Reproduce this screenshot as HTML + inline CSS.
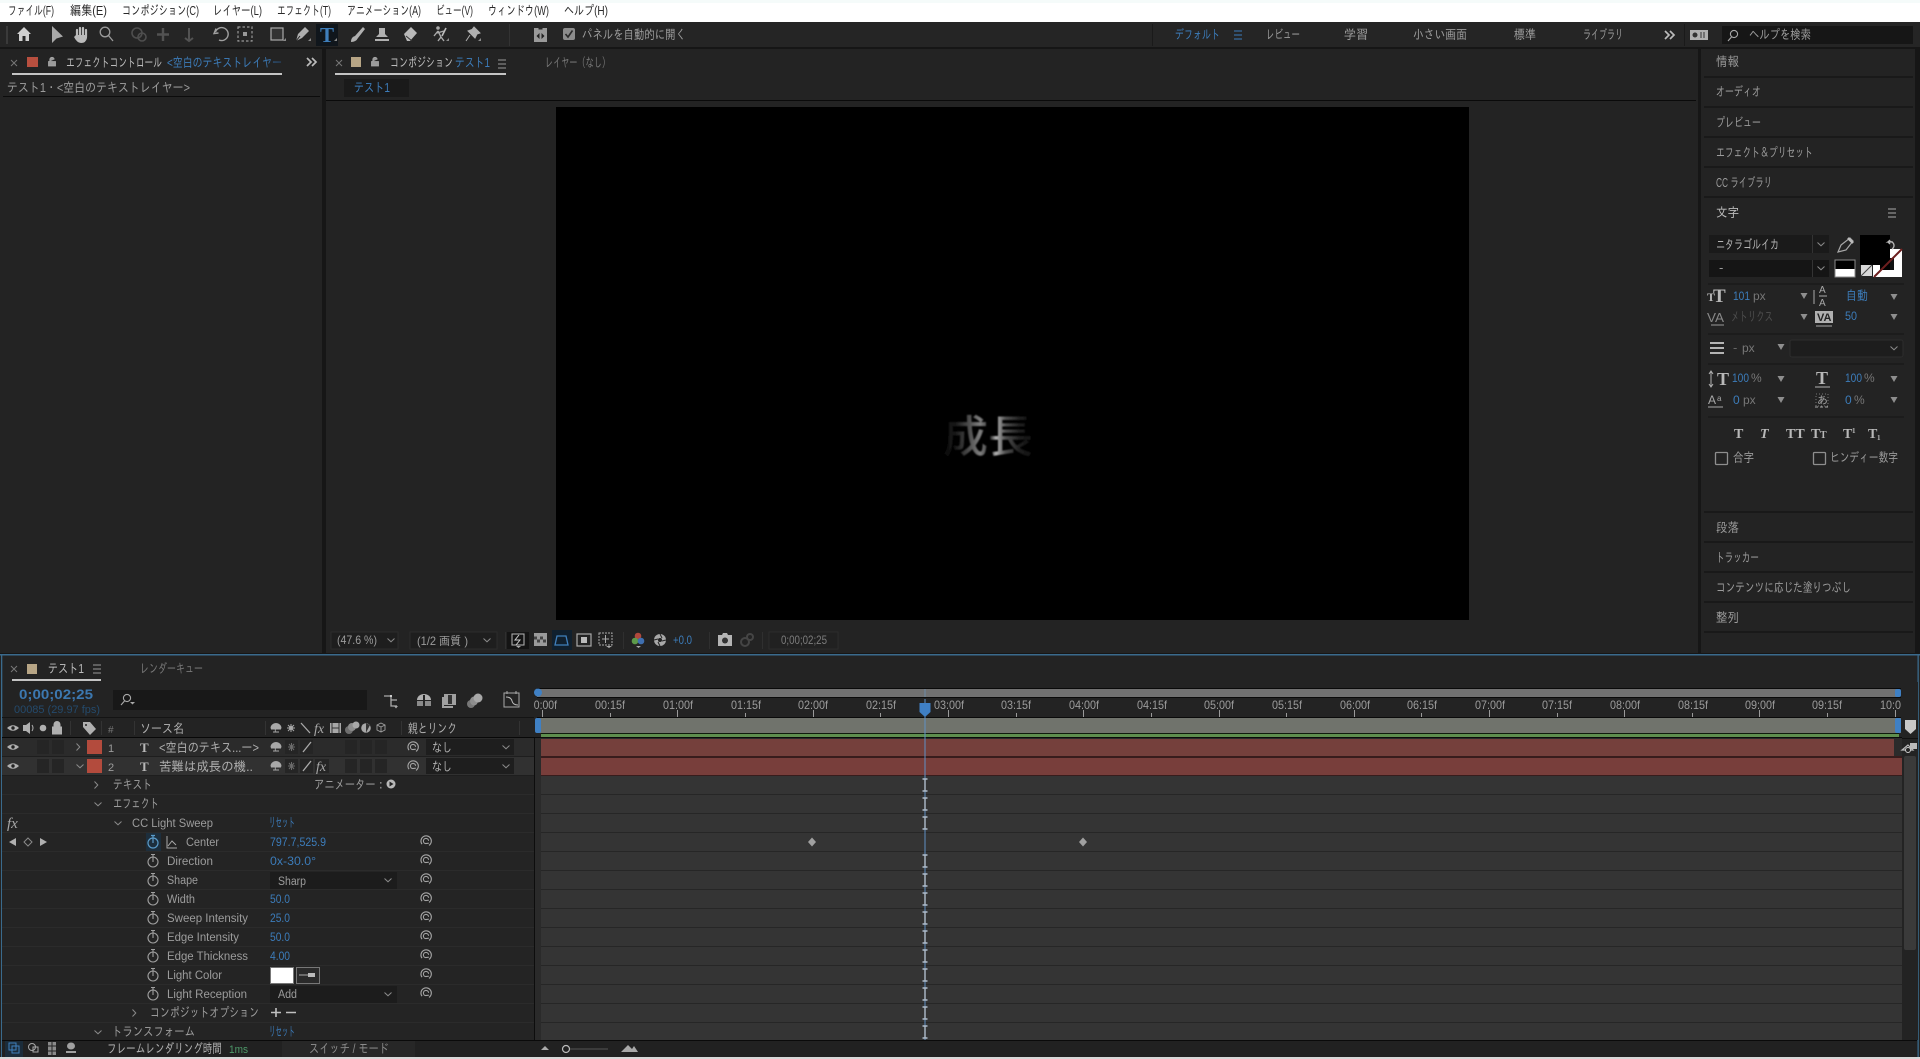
<!DOCTYPE html>
<html lang="ja"><head><meta charset="utf-8"><title>After Effects</title>
<style>
html,body{margin:0;padding:0;background:#232323;width:1920px;height:1059px;overflow:hidden}
svg{display:block;position:absolute;left:0;top:0}
text{font-family:"Liberation Sans","IPAGothic","Noto Sans CJK JP",sans-serif;font-size:13px;fill:#9c9c9c;white-space:pre}
.m{fill:#2a2a2a;font-size:13px}
.b{fill:#3c7cba}
.d{fill:#5a5a5a}
.s{font-size:12px}
.w{fill:#bcbcbc}
.sf{font-family:"Liberation Serif",serif;font-weight:bold;fill:#b8b8b8}
</style></head><body>
<svg width="1920" height="1059" viewBox="0 0 1920 1059" xmlns="http://www.w3.org/2000/svg">
<defs>
<g id="sp" fill="none" stroke="#a4a4a4" stroke-width="1.1"><path d="M-4 3.2A5.2 5.2 0 1 1 3 4.4M2.6 -.2A2.6 2.6 0 1 0 -.2 2.6L2.8 2.2"/></g>
<g id="sw" fill="none" stroke="#a0a0a0" stroke-width="1.1"><circle cy="1" r="5"/><path d="M-2 -6.5H2M0 -6V1"/></g>
<path id="cd" d="M-3.5 -1.5L0 1.8L3.5 -1.5" fill="none" stroke="#8a8a8a" stroke-width="1"/>
<path id="cr" d="M-1.5 -3.5L1.8 0L-1.5 3.5" fill="none" stroke="#8a8a8a" stroke-width="1"/>
<path id="tri" d="M-3.5 -3H3.500L0 3Z" fill="#8e8e8e"/>
<path id="xx" d="M-3 -3L3 3M3 -3L-3 3" stroke="#777" stroke-width="1"/>
<path id="lk" d="M-3.5 -.5H3.5V4H-3.5ZM-2.2 -.5V-2.5A2.2 2.2 0 0 1 2.2 -2.5" fill="#a8a8a8" stroke="#a8a8a8" stroke-width=".8" fill-opacity=".9"/>
<g id="I" stroke="#aebccc" stroke-width="1.4"><path d="M-2.5 -6H2.5M-2.5 6H2.5M0 -6V6"/></g>
<path id="key" d="M0 -4.5L4 0L0 4.500L-4 0Z" fill="#a0a0a0"/>
<g id="eye"><path d="M-6 0Q0 -5.5 6 0Q0 5.5 -6 0Z" fill="#b0b0b0"/><circle r="1.7" fill="#222"/></g>
<g id="shy"><path d="M-5 1A5 4.5 0 0 1 5 1ZM-5 2H5M-.7 1V5M-3 5H3" fill="#a8a8a8" stroke="#a8a8a8" stroke-width=".9"/></g>
<pattern id="rr" x="541" y="776" width="10" height="19" patternUnits="userSpaceOnUse"><rect width="10" height="19" fill="#343434"/><rect y="18" width="10" height="1" fill="#262626"/></pattern>
<pattern id="rl" x="0" y="776" width="10" height="19" patternUnits="userSpaceOnUse"><rect width="10" height="19" fill="#242424"/><rect y="18" width="10" height="1" fill="#2b2b2b"/></pattern>
<linearGradient id="sweep" gradientUnits="userSpaceOnUse" x1="935" y1="0" x2="1040" y2="0">
<stop offset="0" stop-color="#050505"/><stop offset=".19" stop-color="#161616"/><stop offset=".33" stop-color="#505050"/><stop offset=".43" stop-color="#808080"/><stop offset=".49" stop-color="#505050"/><stop offset=".53" stop-color="#303030"/><stop offset=".58" stop-color="#b4b4b4"/><stop offset=".67" stop-color="#505050"/><stop offset=".81" stop-color="#1e1e1e"/><stop offset="1" stop-color="#050505"/></linearGradient>
<filter id="bl"><feGaussianBlur stdDeviation=".8"/></filter>
<clipPath id="ruler"><rect x="534" y="698" width="1367" height="20"/></clipPath>
<linearGradient id="fade" x1="0" x2="1" y1="0" y2="0"><stop offset=".85" stop-color="#3c7cba"/><stop offset="1" stop-color="#26466a"/></linearGradient>
</defs>

<!-- base -->
<rect width="1920" height="1059" fill="#161616"/>
<!-- menu bar -->
<rect width="1920" height="22" fill="#fff"/><rect width="1920" height="3" fill="#f5fbfa"/>
<text class="m" x="8" y="15" textLength="46" lengthAdjust="spacingAndGlyphs">ファイル(F)</text>
<text class="m" x="70" y="15" textLength="37" lengthAdjust="spacingAndGlyphs">編集(E)</text>
<text class="m" x="122" y="15" textLength="77" lengthAdjust="spacingAndGlyphs">コンポジション(C)</text>
<text class="m" x="213" y="15" textLength="49" lengthAdjust="spacingAndGlyphs">レイヤー(L)</text>
<text class="m" x="277" y="15" textLength="54" lengthAdjust="spacingAndGlyphs">エフェクト(T)</text>
<text class="m" x="347" y="15" textLength="74" lengthAdjust="spacingAndGlyphs">アニメーション(A)</text>
<text class="m" x="436" y="15" textLength="37" lengthAdjust="spacingAndGlyphs">ビュー(V)</text>
<text class="m" x="488" y="15" textLength="61" lengthAdjust="spacingAndGlyphs">ウィンドウ(W)</text>
<text class="m" x="564" y="15" textLength="44" lengthAdjust="spacingAndGlyphs">ヘルプ(H)</text>

<!-- toolbar -->
<rect y="22" width="1920" height="25" fill="#252525"/>
<rect x="6" y="26" width="2" height="18" fill="#3a3a3a"/>
<path d="M17 34L24 27L31 34H29V41H25.5V36H22.5V41H19V34Z" fill="#cfcfcf"/>
<path d="M52 26V43L56.5 38.5L63 36.5Z" fill="#a8a8a8"/>
<g stroke="#bbb" stroke-width="2.2" stroke-linecap="round" fill="none"><path d="M77 30V36M80 28V36M83 28V36M86 30V37"/></g><path d="M76 35H87V38Q86 43 81 43Q77 43 74 37Z" fill="#bbb"/>
<g fill="none" stroke="#9a9a9a" stroke-width="1.3"><circle cx="105" cy="32" r="4.8"/><path d="M108.5 35.5L113 41"/></g>
<g fill="none" stroke="#4e4e4e" stroke-width="1.6"><circle cx="137" cy="33" r="5"/><circle cx="142" cy="37" r="4"/></g>
<path d="M163 28V41M157 34.5H169" stroke="#525252" stroke-width="2.4"/><path d="M189 28V41M185 38L189 41L193 38" stroke="#525252" stroke-width="2" fill="none"/>
<g fill="none" stroke="#a0a0a0" stroke-width="1.4"><path d="M216 28.5L214 33.5L218.5 33M215.5 32A6.5 6.5 0 1 1 219 40" /></g>
<rect x="238" y="27" width="14" height="14" fill="none" stroke="#999" stroke-width="1.2" stroke-dasharray="2.5 2"/><rect x="243" y="32" width="4" height="4" fill="#999"/>
<rect x="271" y="28" width="12" height="12" fill="#333" stroke="#aaa" stroke-width="1.2"/>
<path d="M296 41L298 34L305 27L309 31L302 38Z" fill="#b0b0b0"/><path d="M296 41L300 36" stroke="#222"/>
<rect x="316" y="24" width="22" height="22" fill="#10161c"/><text x="320" y="42" style="font-family:'Liberation Serif',serif;font-size:21px;font-weight:bold;fill:#3f7fbc">T</text>
<path d="M351 42Q351 37 355 36L363 27L365 29L358 38Q356 42 351 42Z" fill="#b0b0b0"/>
<path d="M379 28H385V34L388 37H376L379 34ZM375 39H389V41H375Z" fill="#b0b0b0"/>
<path d="M404 34L411 27L417 33L410 41H407Z" fill="#b8b8b8"/><path d="M406 36L412 41" stroke="#333"/>
<circle cx="438" cy="28" r="1.8" fill="#aaa"/><path d="M438 31L434 36M438 31L441 37L438 41M441 37L444 41M437 33L444 31" stroke="#aaa" stroke-width="1.4" fill="none"/><path d="M446 28L442 36" stroke="#bbb" stroke-width="1.6"/>
<path d="M474 27L480 33L477 34L475 38L468 31L472 29.5ZM470 35L466 41" fill="#b0b0b0" stroke="#b0b0b0"/>
<g fill="#8a8a8a"><path d="M283 41h3v-3zM308 41h3v-3zM334 41h3v-3zM446 41h3v-3zM478 41h3v-3z"/></g>
<rect x="509" y="24" width="1" height="22" fill="#333"/>
<rect x="534" y="28" width="13" height="14" fill="#9a9a9a"/><path d="M538.500 27.500h4v2h-4z" fill="#252525"/><path d="M539.500 33V39L536.500 36ZM541.500 33V39L544.500 36Z" fill="#222"/>
<rect x="563" y="28" width="12" height="12" rx="2" fill="#8c8c8c"/><path d="M565.5 34L568 37L572.5 30.5" stroke="#2a2a2a" stroke-width="1.6" fill="none"/>
<text x="582" y="39" textLength="104" lengthAdjust="spacingAndGlyphs">パネルを自動的に開く</text>
<rect x="1152" y="24" width="1" height="22" fill="#1a1a1a"/>
<text class="b" x="1175" y="39" textLength="45" lengthAdjust="spacingAndGlyphs">デフォルト</text>
<path d="M1234 31H1242M1234 35H1242M1234 39H1242" stroke="#3c7cba"/>
<text x="1266" y="39" textLength="34" lengthAdjust="spacingAndGlyphs">レビュー</text>
<text x="1344" y="39" textLength="24" lengthAdjust="spacingAndGlyphs">学習</text>
<text x="1413" y="39" textLength="54" lengthAdjust="spacingAndGlyphs">小さい画面</text>
<text x="1514" y="39" textLength="22" lengthAdjust="spacingAndGlyphs">標準</text>
<text x="1583" y="39" textLength="40" lengthAdjust="spacingAndGlyphs">ライブラリ</text>
<path d="M1665 31L1669 35L1665 39M1670 31L1674 35L1670 39" fill="none" stroke="#bbb" stroke-width="1.7"/>
<rect x="1684" y="24" width="1" height="22" fill="#1a1a1a"/>
<rect x="1690" y="30" width="18" height="10" fill="#b0b0b0"/><circle cx="1695" cy="35" r="2.5" fill="#333"/><path d="M1701 32V38M1704 32V38" stroke="#333"/>
<rect x="1722" y="26" width="191" height="18" fill="#161616"/>
<g fill="none" stroke="#a8a8a8" stroke-width="1.1"><circle cx="1734" cy="34" r="3.6"/><path d="M1731.5 37L1728 41"/></g>
<text x="1749" y="39" textLength="62" lengthAdjust="spacingAndGlyphs">ヘルプを検索</text>

<!-- left panel -->
<rect y="49" width="322" height="604" fill="#232323"/>
<use href="#xx" x="14" y="63"/><rect x="27" y="57" width="11" height="10" fill="#b84f3f"/><use href="#lk" x="52" y="62"/>
<text class="w" x="66" y="67" textLength="96" lengthAdjust="spacingAndGlyphs">エフェクトコントロール</text>
<text x="167" y="67" textLength="115" lengthAdjust="spacingAndGlyphs" style="fill:url(#fade)">&lt;空白のテキストレイヤー</text>
<path d="M307 58L311 62L307 66M312 58L316 62L312 66" fill="none" stroke="#bbb" stroke-width="1.7"/>
<rect x="12" y="73" width="270" height="2" fill="#c4c4c4"/>
<text x="7" y="92" textLength="183" lengthAdjust="spacingAndGlyphs">テスト1・&lt;空白のテキストレイヤー&gt;</text>
<rect x="3" y="96" width="317" height="1" fill="#0c0c0c"/>

<!-- comp panel -->
<rect x="326" y="49" width="1372" height="604" fill="#232323"/>
<use href="#xx" x="339" y="63"/><rect x="351" y="57" width="10" height="10" fill="#b7a585"/><use href="#lk" x="375" y="62"/>
<text class="w" x="390" y="67" textLength="63" lengthAdjust="spacingAndGlyphs">コンポジション</text>
<text class="b" x="455" y="67" textLength="35" lengthAdjust="spacingAndGlyphs">テスト1</text>
<path d="M498 60H506M498 64H506M498 68H506" stroke="#9a9a9a"/>
<rect x="335" y="73" width="171" height="2" fill="#c4c4c4"/>
<text class="d" x="545" y="67" textLength="65" lengthAdjust="spacingAndGlyphs" style="fill:#787878">レイヤー（なし）</text>
<rect x="344" y="79" width="65" height="18" fill="#1a1a1a"/>
<text class="b" x="354" y="92" textLength="36" lengthAdjust="spacingAndGlyphs">テスト1</text>
<rect x="326" y="100" width="1370" height="1" fill="#0a0a0a"/>
<rect x="326" y="101" width="1372" height="519" fill="#232323"/>
<rect x="556" y="107" width="913" height="513" fill="#000"/>
<text x="943" y="452" filter="url(#bl)" style="font-family:'Noto Sans CJK JP','IPAGothic',sans-serif;font-size:44px;font-weight:500;fill:url(#sweep)" textLength="90" lengthAdjust="spacingAndGlyphs">成長</text>

<!-- viewer footer -->
<rect x="331" y="632" width="67" height="17" fill="#1e1e1e" stroke="#2c2c2c"/>
<text x="337" y="644" textLength="40" lengthAdjust="spacingAndGlyphs" style="font-size:12px">(47.6 %)</text><use href="#cd" x="391" y="640"/>
<rect x="410" y="632" width="87" height="17" fill="#1e1e1e" stroke="#2c2c2c"/>
<text x="417" y="645" textLength="51" lengthAdjust="spacingAndGlyphs" style="font-size:12px">(1/2 画質 )</text><use href="#cd" x="487" y="640"/>
<rect x="507" y="632" width="22" height="17" fill="#141414"/>
<rect x="512" y="634" width="12" height="11" fill="none" stroke="#aaa" stroke-width="1.1"/><path d="M519 635L515 640H520L516 645" stroke="#ccc" fill="none"/><path d="M516 646h5l-2.500 2z" fill="#aaa"/>
<rect x="534" y="633" width="13" height="13" fill="#9a9a9a"/><path d="M534 636.500h3v3h-3zM540 636.500h3v3h-3zM537 639.500h3v3h-3zM543 639.500h3v3h-3z" fill="#444"/>
<rect x="552" y="630" width="20" height="20" fill="#10202e"/>
<path d="M557 636H566L568 645H555Z" fill="none" stroke="#3f7fbc" stroke-width="1.3"/>
<rect x="577" y="634" width="14" height="12" fill="none" stroke="#aaa" stroke-width="1.2"/><rect x="581" y="637" width="6" height="6" fill="#bbb"/>
<rect x="599" y="633" width="13" height="12" fill="none" stroke="#aaa" stroke-dasharray="2 1"/><path d="M605.500 635V643M602 639H609" stroke="#aaa"/><path d="M606 646h6l-3 2z" fill="#aaa"/>
<circle cx="638" cy="636" r="3.300" fill="#b0483c"/><circle cx="635" cy="641" r="3.300" fill="#5d9a4a"/><circle cx="641" cy="641" r="3.300" fill="#3f6fb0"/><path d="M636 646h5l-2.500 2z" fill="#aaa"/>
<circle cx="660" cy="640" r="6" fill="#a8a8a8"/><circle cx="660" cy="640" r="2" fill="#232323"/><path d="M660 634L662 638M666 640L662 641M660 646L658 642M654 640L658 639" stroke="#232323"/>
<text class="b" x="673" y="644" textLength="19" lengthAdjust="spacingAndGlyphs" style="font-size:12px">+0.0</text>
<path d="M718 635H722L723 633H727L728 635H732V646H718Z" fill="#b4b4b4"/><circle cx="725" cy="640.500" r="3" fill="#333"/>
<circle cx="745" cy="642" r="4" fill="none" stroke="#454545" stroke-width="2"/><circle cx="750" cy="637" r="3" fill="none" stroke="#454545" stroke-width="2"/>
<rect x="769" y="632" width="69" height="17" fill="#212121" stroke="#2c2c2c"/>
<text x="781" y="644" textLength="46" lengthAdjust="spacingAndGlyphs" style="font-size:12px;fill:#7c7c7c">0;00;02;25</text>
<rect x="505" y="632" width="1" height="17" fill="#2f2f2f"/><rect x="623" y="632" width="1" height="17" fill="#2f2f2f"/><rect x="709" y="632" width="1" height="17" fill="#2f2f2f"/><rect x="762" y="632" width="1" height="17" fill="#2f2f2f"/>

<!-- right column -->
<rect x="1701" y="49" width="214" height="604" fill="#232323"/>
<g fill="#191919"><rect x="1704" y="76" width="209" height="2"/><rect x="1704" y="106" width="209" height="2"/><rect x="1704" y="136" width="209" height="2"/><rect x="1704" y="166" width="209" height="2"/><rect x="1704" y="196" width="209" height="2"/><rect x="1704" y="511" width="209" height="2"/><rect x="1704" y="541" width="209" height="2"/><rect x="1704" y="571" width="209" height="2"/><rect x="1704" y="601" width="209" height="2"/><rect x="1704" y="631" width="209" height="2"/></g>
<text x="1716" y="66" textLength="23" lengthAdjust="spacingAndGlyphs">情報</text>
<text x="1716" y="96" textLength="45" lengthAdjust="spacingAndGlyphs">オーディオ</text>
<text x="1716" y="127" textLength="45" lengthAdjust="spacingAndGlyphs">プレビュー</text>
<text x="1716" y="157" textLength="97" lengthAdjust="spacingAndGlyphs">エフェクト＆プリセット</text>
<text x="1716" y="187" textLength="56" lengthAdjust="spacingAndGlyphs">CC ライブラリ</text>
<text class="w" x="1716" y="217" textLength="23" lengthAdjust="spacingAndGlyphs">文字</text>
<path d="M1888 209H1896M1888 213H1896M1888 217H1896" stroke="#a8a8a8" stroke-width="1.100"/>
<rect x="1709" y="235" width="120" height="18" fill="#1a1a1a"/><rect x="1812" y="235" width="1" height="18" fill="#333"/>
<text x="1716" y="249" textLength="63" lengthAdjust="spacingAndGlyphs" style="fill:#b4b4b4">ニタラゴルイカ</text><use href="#cd" x="1821" y="244"/>
<rect x="1709" y="260" width="120" height="17" fill="#151515"/><rect x="1812" y="260" width="1" height="17" fill="#333"/>
<text x="1719" y="272">-</text><use href="#cd" x="1821" y="268"/>
<path d="M1838 252L1841 245L1850 238L1853 241L1846 250Z" fill="none" stroke="#a8a8a8" stroke-width="1.200"/><path d="M1848 238L1853 243" stroke="#bbb" stroke-width="2.500"/>
<rect x="1835" y="260" width="20" height="9" fill="#000"/><rect x="1835" y="269" width="20" height="8" fill="#fff"/><rect x="1835" y="260" width="20" height="17" fill="none" stroke="#8a8a8a"/>
<rect x="1873" y="249" width="29" height="28" fill="#fff"/><rect x="1880" y="258" width="14" height="12" fill="#000"/>
<rect x="1860" y="235" width="30" height="30" fill="#000"/><rect x="1890" y="258" width="4" height="12" fill="#111"/>
<path d="M1874 277L1902 249" stroke="#6c1e1e" stroke-width="2"/>
<rect x="1861" y="265" width="11" height="11" fill="#d8d8d8"/><path d="M1861 276L1872 265" stroke="#444"/>
<path d="M1892 249A4 4 0 1 0 1888 242H1893M1890 240L1888 242L1890 244" fill="none" stroke="#b8b8b8" stroke-width="1.300"/>

<g fill="#1c1c1c"><rect x="1708" y="283" width="196" height="2"/><rect x="1708" y="333" width="196" height="2"/><rect x="1708" y="363" width="196" height="2"/><rect x="1708" y="416" width="196" height="2"/></g>
<text class="sf" x="1707" y="301" style="font-size:12px">T</text><text class="sf" x="1713" y="302" style="font-size:19px">T</text>
<text class="b" x="1733" y="300" textLength="17" lengthAdjust="spacingAndGlyphs" style="font-size:12px">101</text><text x="1753" y="300" style="fill:#777" class="s">px</text><use href="#tri" x="1804" y="296"/>
<text x="1819" y="293" style="fill:#a8a8a8;font-size:10px">A</text><text x="1819" y="306" style="fill:#a8a8a8;font-size:10px">A</text><path d="M1814 290V304M1819 296H1827" stroke="#a8a8a8"/>
<text class="b" x="1846" y="300" textLength="22" lengthAdjust="spacingAndGlyphs">自動</text><use href="#tri" x="1894" y="297"/>
<text x="1707" y="322" style="fill:#888;font-size:13px" textLength="17" lengthAdjust="spacingAndGlyphs">VA</text><path d="M1711 325H1724" stroke="#999"/>
<text class="d" x="1731" y="321" textLength="42" lengthAdjust="spacingAndGlyphs" style="fill:#4e4e4e">メトリクス</text><use href="#tri" x="1804" y="317"/>
<rect x="1815" y="311" width="18" height="12" fill="#b0b0b0"/><text x="1817" y="321" style="font-size:11px;fill:#232323;font-weight:bold">VA</text><path d="M1816 326H1832" stroke="#a8a8a8"/>
<text class="b" x="1845" y="320" textLength="12" lengthAdjust="spacingAndGlyphs" style="font-size:12px">50</text><use href="#tri" x="1894" y="317"/>
<path d="M1710 343H1724M1710 348H1724M1710 353H1724" stroke="#b4b4b4" stroke-width="2"/>
<text x="1733" y="352" style="fill:#666">- </text><text x="1742" y="352" class="s" style="fill:#777">px</text><use href="#tri" x="1781" y="347"/>
<rect x="1790" y="340" width="113" height="17" rx="2" fill="#1d1d1d" stroke="#2d2d2d"/><use href="#cd" x="1894" y="348"/>
<text class="sf" x="1717" y="385" style="font-size:18px">T</text><path d="M1711 372V386M1709 374L1711 371L1713 374M1709 384L1711 387L1713 384" stroke="#b0b0b0" fill="none"/>
<text class="b" x="1732" y="382" textLength="17" lengthAdjust="spacingAndGlyphs" style="font-size:12px">100</text><text x="1751" y="382" class="s" style="fill:#777">%</text><use href="#tri" x="1781" y="379"/>
<text class="sf" x="1816" y="384" style="font-size:18px">T</text><path d="M1815 387H1830" stroke="#b0b0b0"/>
<text class="b" x="1845" y="382" textLength="17" lengthAdjust="spacingAndGlyphs" style="font-size:12px">100</text><text x="1864" y="382" class="s" style="fill:#777">%</text><use href="#tri" x="1894" y="379"/>
<text x="1708" y="404" style="font-size:12px;fill:#a8a8a8">A</text><text x="1717" y="401" style="font-size:8px;fill:#a8a8a8">a</text><path d="M1708 407H1723" stroke="#a8a8a8"/>
<text class="b" x="1733" y="404" style="font-size:12px">0</text><text x="1743" y="404" class="s" style="fill:#777">px</text><use href="#tri" x="1781" y="400"/>
<text x="1817" y="404" style="font-size:11px;fill:#a8a8a8">あ</text><path d="M1815 407H1829" stroke="#a8a8a8" stroke-dasharray="3 2"/><rect x="1816" y="394" width="12" height="12" fill="none" stroke="#777" stroke-dasharray="1 2"/>
<text class="b" x="1845" y="404" style="font-size:12px">0</text><text x="1854" y="404" class="s" style="fill:#777">%</text><use href="#tri" x="1894" y="400"/>
<text class="sf" x="1734" y="438" style="font-size:14px">T</text><text class="sf" x="1760" y="438" style="font-size:14px;font-style:italic">T</text><text class="sf" x="1786" y="438" style="font-size:14px">TT</text><text class="sf" x="1811" y="438" style="font-size:14px">T</text><text class="sf" x="1820" y="438" style="font-size:10px">T</text><text class="sf" x="1843" y="438" style="font-size:14px">T</text><text class="sf" x="1852" y="433" style="font-size:7px">1</text><text class="sf" x="1868" y="438" style="font-size:14px">T</text><text class="sf" x="1877" y="440" style="font-size:7px">1</text>
<rect x="1715.500" y="452.500" width="12" height="12" rx="1" fill="none" stroke="#8e8e8e" stroke-width="1.300"/><text x="1733" y="462" textLength="21" lengthAdjust="spacingAndGlyphs">合字</text>
<rect x="1813.500" y="452.500" width="12" height="12" rx="1" fill="none" stroke="#8e8e8e" stroke-width="1.300"/><text x="1830" y="462" textLength="68" lengthAdjust="spacingAndGlyphs">ヒンディー数字</text>
<text x="1716" y="532" textLength="23" lengthAdjust="spacingAndGlyphs">段落</text>
<text x="1716" y="562" textLength="43" lengthAdjust="spacingAndGlyphs">トラッカー</text>
<text x="1716" y="592" textLength="135" lengthAdjust="spacingAndGlyphs">コンテンツに応じた塗りつぶし</text>
<text x="1716" y="622" textLength="23" lengthAdjust="spacingAndGlyphs">整列</text>

<!-- timeline frame -->
<rect x="0" y="654" width="1920" height="403" fill="#232323"/>
<rect x="0" y="654" width="1920" height="1.500" fill="#3a6a8c"/>
<rect x="1" y="654" width="1.300" height="403" fill="#3a6a8c"/><rect x="1917.500" y="654" width="1.300" height="403" fill="#3a6a8c"/>
<use href="#xx" x="14" y="669"/><rect x="27" y="664" width="10" height="10" fill="#b7a585"/>
<text class="w" x="48" y="673" textLength="36" lengthAdjust="spacingAndGlyphs">テスト1</text>
<path d="M93 665H101M93 669H101M93 673H101" stroke="#9a9a9a"/>
<rect x="12" y="679" width="89" height="2" fill="#c4c4c4"/>
<text x="140" y="673" textLength="63" lengthAdjust="spacingAndGlyphs" style="fill:#787878">レンダーキュー</text>
<text x="19" y="699" textLength="74" lengthAdjust="spacingAndGlyphs" style="font-size:14px;font-weight:bold;fill:#3c78b0">0;00;02;25</text>
<text x="14" y="713" textLength="86" lengthAdjust="spacingAndGlyphs" style="font-size:11px;fill:#244a6c">00085 (29.97 fps)</text>
<rect x="113" y="690" width="254" height="20" fill="#181818"/>
<g fill="none" stroke="#a8a8a8" stroke-width="1.100"><circle cx="127" cy="698" r="3.600"/><path d="M124.500 701L121 705"/></g><path d="M130 702h5l-2.500 2.500z" fill="#aaa"/>
<!-- tl toolbar icons -->
<path d="M384 696H391M391 695V706H397M391 700H397" fill="none" stroke="#aaa" stroke-width="1.300"/><rect x="390" y="695" width="2" height="2" fill="#ccc"/><path d="M394 706h4l-2 2.500z" fill="#aaa"/>
<path d="M417 700A7 6 0 0 1 431 700Z" fill="#b0b0b0"/><rect x="417" y="701" width="14" height="5" fill="#8a8a8a"/><rect x="423" y="695" width="2" height="11" fill="#232323"/>
<rect x="444" y="694" width="12" height="11" fill="#a0a0a0"/><path d="M448 695H452V704H448Z" fill="#333"/><rect x="442" y="697" width="2" height="10" fill="#a0a0a0"/><rect x="442" y="706" width="11" height="2" fill="#a0a0a0"/>
<ellipse cx="471" cy="704" rx="4" ry="4" fill="#777"/><ellipse cx="474" cy="701" rx="4" ry="4.500" fill="#8e8e8e"/><ellipse cx="478" cy="698" rx="4.500" ry="4.500" fill="#a8a8a8"/>
<rect x="504" y="693" width="15" height="14" fill="none" stroke="#aaa"/><path d="M506 697Q511 697 512 701T518 705" fill="none" stroke="#bbb"/><path d="M507 691V694M516 691V694" stroke="#aaa"/>

<!-- left header -->
<rect x="2" y="717" width="532" height="1" fill="#141414"/>
<use href="#eye" x="13" y="728"/>
<path d="M23 725H26L30 722V734L26 731H23Z" fill="#b0b0b0"/><path d="M32 725Q34 728 32 731" stroke="#b0b0b0" fill="none"/>
<circle cx="43" cy="728" r="3.300" fill="#b0b0b0"/>
<path d="M52.500 727H61.500V734H52.500ZM54 727V724.500A3 3 0 0 1 60 724.500V727" fill="#b0b0b0" stroke="#b0b0b0"/>
<rect x="70" y="721" width="1" height="14" fill="#333"/>
<path d="M83 722H90L96 729L90 735L83 727Z" fill="#b0b0b0"/><circle cx="86" cy="725" r="1" fill="#232323"/>
<rect x="101" y="721" width="1" height="14" fill="#333"/>
<text x="108" y="733" style="fill:#777;font-size:10px">#</text><rect x="134" y="721" width="1" height="14" fill="#333"/>
<text x="140" y="733" textLength="44" lengthAdjust="spacingAndGlyphs" style="fill:#b0b0b0">ソース名</text>
<rect x="265" y="721" width="1" height="14" fill="#333"/>
<use href="#shy" x="276" y="727"/>
<g stroke="#a8a8a8"><path d="M287 728H295M291 724V732M288 725L294 731M294 725L288 731"/></g><circle cx="291" cy="728" r="2" fill="#a8a8a8"/>
<path d="M301 723L310 733" stroke="#a8a8a8" stroke-width="1.300"/>
<text x="314" y="733" style="font-family:'Liberation Serif',serif;font-style:italic;font-size:14px;fill:#a8a8a8">fx</text>
<rect x="330" y="723" width="11" height="10" fill="#a8a8a8"/><path d="M332 723V733M339 723V733M332 728H339" stroke="#333"/>
<circle cx="349" cy="730" r="4" fill="#6e6e6e"/><circle cx="352" cy="727" r="4" fill="#8c8c8c"/><circle cx="356" cy="725" r="3.500" fill="#a8a8a8"/>
<circle cx="366" cy="728" r="4.800" fill="#a8a8a8"/><path d="M366 723.200V732.800L370 725Z" fill="#333"/>
<path d="M381 723L385 725V730L381 732L377 730V725ZM377 725L381 727L385 725M381 727V732" fill="none" stroke="#a0a0a0" stroke-width=".9"/>
<rect x="401" y="721" width="1" height="14" fill="#333"/>
<text x="408" y="733" textLength="49" lengthAdjust="spacingAndGlyphs" style="fill:#b0b0b0">親とリンク</text>
<rect x="519" y="721" width="1" height="14" fill="#333"/>
<rect x="2" y="737" width="532" height="1" fill="#080808"/>

<!-- layer rows -->
<rect x="2" y="738" width="532" height="19" fill="#2b2b2b"/><rect x="2" y="757" width="532" height="19" fill="#313131"/>
<rect x="2" y="756" width="532" height="1" fill="#1e1e1e"/><rect x="2" y="775" width="532" height="1" fill="#1e1e1e"/>
<use href="#eye" x="13" y="747"/><use href="#eye" x="13" y="766"/>
<g fill="#252525"><rect x="37" y="740" width="12" height="14"/><rect x="52" y="740" width="12" height="14"/><rect x="37" y="759" width="12" height="14"/><rect x="52" y="759" width="12" height="14"/><rect x="345" y="740" width="12" height="14"/><rect x="360" y="740" width="12" height="14"/><rect x="375" y="740" width="12" height="14"/><rect x="345" y="759" width="12" height="14"/><rect x="360" y="759" width="12" height="14"/><rect x="375" y="759" width="12" height="14"/></g>
<use href="#cr" x="78" y="747"/><use href="#cd" x="80" y="766"/>
<rect x="87" y="740" width="15" height="14" fill="#b34b3d"/><rect x="87" y="759" width="15" height="14" fill="#b34b3d"/>
<text x="108" y="752" style="font-size:11px">1</text><text x="108" y="771" style="font-size:11px">2</text>
<text class="sf" x="140" y="752" style="font-size:13px">T</text><text class="sf" x="140" y="771" style="font-size:13px">T</text>
<text x="159" y="752" textLength="100" lengthAdjust="spacingAndGlyphs" style="fill:#b0b0b0">&lt;空白のテキス...ー&gt;</text>
<text x="159" y="771" textLength="94" lengthAdjust="spacingAndGlyphs" style="fill:#b0b0b0">苦難は成長の機..</text>
<use href="#shy" x="276" y="746"/><use href="#shy" x="276" y="765"/>
<rect x="285" y="740" width="13" height="14" fill="#252525"/><rect x="285" y="759" width="13" height="14" fill="#252525"/>
<g stroke="#6c6c6c"><path d="M288 747H295M291.500 743V751M289 744L294 750M294 744L289 750M288 766H295M291.500 762V770M289 763L294 769M294 763L289 769"/></g>
<rect x="300" y="740" width="13" height="14" fill="#252525"/><rect x="300" y="759" width="13" height="14" fill="#252525"/>
<path d="M303 752L311 742M303 771L311 761" stroke="#aaa" stroke-width="1.300"/>
<rect x="315" y="759" width="14" height="14" fill="#252525"/>
<text x="316" y="771" style="font-family:'Liberation Serif',serif;font-style:italic;font-size:14px;fill:#a8a8a8">fx</text>
<use href="#sp" x="413" y="747"/><use href="#sp" x="413" y="766"/>
<rect x="426" y="739" width="88" height="16" fill="#1e1e1e"/><rect x="426" y="758" width="88" height="16" fill="#1e1e1e"/>
<text x="432" y="752" textLength="20" lengthAdjust="spacingAndGlyphs" style="fill:#b0b0b0">なし</text><text x="432" y="771" textLength="20" lengthAdjust="spacingAndGlyphs" style="fill:#b0b0b0">なし</text>
<use href="#cd" x="506" y="747"/><use href="#cd" x="506" y="766"/>

<!-- property rows left -->
<rect x="2" y="776" width="532" height="264" fill="url(#rl)"/>
<use href="#cr" x="96" y="785"/><text x="113" y="789" textLength="39" lengthAdjust="spacingAndGlyphs">テキスト</text>
<text x="314" y="789" textLength="72" lengthAdjust="spacingAndGlyphs">アニメーター：</text><circle cx="391" cy="784" r="4.500" fill="#b8b8b8"/><path d="M389.500 781.500L393.500 784L389.500 786.500Z" fill="#232323"/>
<use href="#cd" x="98" y="804"/><text x="113" y="808" textLength="46" lengthAdjust="spacingAndGlyphs">エフェクト</text>
<text x="7" y="828" style="font-family:'Liberation Serif',serif;font-style:italic;font-size:15px;fill:#a8a8a8">fx</text>
<use href="#cd" x="118" y="823"/><text x="132" y="827" textLength="81" lengthAdjust="spacingAndGlyphs" style="font-size:11.500px">CC Light Sweep</text>
<text class="b" x="269" y="827" textLength="26" lengthAdjust="spacingAndGlyphs">リセット</text>
<path d="M16 838V846L9 842Z" fill="#b0b0b0"/><path d="M28 838L32 842L28 846L24 842Z" fill="none" stroke="#8a8a8a"/><path d="M40 838V846L47 842Z" fill="#b0b0b0"/>
<rect x="146" y="833" width="15" height="18" fill="#1d2e3c"/>
<g fill="none" stroke="#5a9ac8" stroke-width="1.200"><circle cx="153" cy="843" r="5"/><path d="M151 835.500H155M153 836V843"/></g>
<path d="M167 836V848H177M168 846L172 841L176 845" fill="none" stroke="#a8a8a8"/>
<text x="186" y="846" textLength="33" lengthAdjust="spacingAndGlyphs" style="font-size:11.500px">Center</text>
<text class="b" x="270" y="846" textLength="56" lengthAdjust="spacingAndGlyphs" style="font-size:11.500px">797.7,525.9</text><use href="#sp" x="426" y="841"/>
<use href="#sw" x="153" y="861"/><text x="167" y="865" textLength="46" lengthAdjust="spacingAndGlyphs" style="font-size:11.500px">Direction</text>
<text class="b" x="270" y="865" textLength="46" lengthAdjust="spacingAndGlyphs" style="font-size:11.500px">0x-30.0°</text><use href="#sp" x="426" y="860"/>
<use href="#sw" x="153" y="880"/><text x="167" y="884" textLength="31" lengthAdjust="spacingAndGlyphs" style="font-size:11.500px">Shape</text>
<rect x="270" y="872" width="127" height="17" fill="#1c1c1c"/><text x="278" y="885" textLength="28" lengthAdjust="spacingAndGlyphs" style="font-size:11.500px">Sharp</text><use href="#cd" x="388" y="880"/><use href="#sp" x="426" y="879"/>
<use href="#sw" x="153" y="899"/><text x="167" y="903" textLength="28" lengthAdjust="spacingAndGlyphs" style="font-size:11.500px">Width</text>
<text class="b" x="270" y="903" textLength="20" lengthAdjust="spacingAndGlyphs" style="font-size:11.500px">50.0</text><use href="#sp" x="426" y="898"/>
<use href="#sw" x="153" y="918"/><text x="167" y="922" textLength="81" lengthAdjust="spacingAndGlyphs" style="font-size:11.500px">Sweep Intensity</text>
<text class="b" x="270" y="922" textLength="20" lengthAdjust="spacingAndGlyphs" style="font-size:11.500px">25.0</text><use href="#sp" x="426" y="917"/>
<use href="#sw" x="153" y="937"/><text x="167" y="941" textLength="72" lengthAdjust="spacingAndGlyphs" style="font-size:11.500px">Edge Intensity</text>
<text class="b" x="270" y="941" textLength="20" lengthAdjust="spacingAndGlyphs" style="font-size:11.500px">50.0</text><use href="#sp" x="426" y="936"/>
<use href="#sw" x="153" y="956"/><text x="167" y="960" textLength="81" lengthAdjust="spacingAndGlyphs" style="font-size:11.500px">Edge Thickness</text>
<text class="b" x="270" y="960" textLength="20" lengthAdjust="spacingAndGlyphs" style="font-size:11.500px">4.00</text><use href="#sp" x="426" y="955"/>
<use href="#sw" x="153" y="975"/><text x="167" y="979" textLength="55" lengthAdjust="spacingAndGlyphs" style="font-size:11.500px">Light Color</text>
<rect x="270.500" y="967.500" width="23" height="16" fill="#fff" stroke="#777"/><rect x="296.500" y="967.500" width="23" height="16" fill="#2a2a2a" stroke="#777"/><path d="M299 975H309" stroke="#aaa"/><rect x="308" y="973" width="7" height="4" fill="#bbb"/><use href="#sp" x="426" y="974"/>
<use href="#sw" x="153" y="994"/><text x="167" y="998" textLength="80" lengthAdjust="spacingAndGlyphs" style="font-size:11.500px">Light Reception</text>
<rect x="270" y="986" width="127" height="17" fill="#1c1c1c"/><text x="278" y="998" textLength="19" lengthAdjust="spacingAndGlyphs" style="font-size:11.500px">Add</text><use href="#cd" x="388" y="994"/><use href="#sp" x="426" y="993"/>
<use href="#cr" x="134" y="1013"/><text x="150" y="1017" textLength="109" lengthAdjust="spacingAndGlyphs">コンポジットオプション</text>
<path d="M271 1012.500H281M276 1008V1017M286 1012.500H296" stroke="#c0c0c0" stroke-width="1.600"/>
<use href="#cd" x="98" y="1032"/><text x="112" y="1036" textLength="83" lengthAdjust="spacingAndGlyphs">トランスフォーム</text>
<text class="b" x="269" y="1036" textLength="26" lengthAdjust="spacingAndGlyphs">リセット</text>

<!-- timeline right -->
<rect x="534" y="682" width="1368" height="36" fill="#232323"/>
<rect x="537" y="688" width="1364" height="1" fill="#0a0a0a"/><rect x="537" y="689" width="1362" height="8" fill="#717171"/><rect x="537" y="697" width="1364" height="1" fill="#0a0a0a"/>
<circle cx="538" cy="692.500" r="4" fill="#3f80c4"/><rect x="1895" y="689" width="6" height="8" rx="2" fill="#3f80c4"/>
<rect x="924.500" y="689" width="1" height="8" fill="#6d8ca8"/>
<g clip-path="url(#ruler)">
<text x="528" y="709" textLength="29" lengthAdjust="spacingAndGlyphs" class="s">00:00f</text>
<text x="595" y="709" textLength="30" lengthAdjust="spacingAndGlyphs" class="s">00:15f</text>
<text x="663" y="709" textLength="30" lengthAdjust="spacingAndGlyphs" class="s">01:00f</text>
<text x="731" y="709" textLength="30" lengthAdjust="spacingAndGlyphs" class="s">01:15f</text>
<text x="798" y="709" textLength="30" lengthAdjust="spacingAndGlyphs" class="s">02:00f</text>
<text x="866" y="709" textLength="30" lengthAdjust="spacingAndGlyphs" class="s">02:15f</text>
<text x="934" y="709" textLength="30" lengthAdjust="spacingAndGlyphs" class="s">03:00f</text>
<text x="1001" y="709" textLength="30" lengthAdjust="spacingAndGlyphs" class="s">03:15f</text>
<text x="1069" y="709" textLength="30" lengthAdjust="spacingAndGlyphs" class="s">04:00f</text>
<text x="1137" y="709" textLength="30" lengthAdjust="spacingAndGlyphs" class="s">04:15f</text>
<text x="1204" y="709" textLength="30" lengthAdjust="spacingAndGlyphs" class="s">05:00f</text>
<text x="1272" y="709" textLength="30" lengthAdjust="spacingAndGlyphs" class="s">05:15f</text>
<text x="1340" y="709" textLength="30" lengthAdjust="spacingAndGlyphs" class="s">06:00f</text>
<text x="1407" y="709" textLength="30" lengthAdjust="spacingAndGlyphs" class="s">06:15f</text>
<text x="1475" y="709" textLength="30" lengthAdjust="spacingAndGlyphs" class="s">07:00f</text>
<text x="1542" y="709" textLength="30" lengthAdjust="spacingAndGlyphs" class="s">07:15f</text>
<text x="1610" y="709" textLength="30" lengthAdjust="spacingAndGlyphs" class="s">08:00f</text>
<text x="1678" y="709" textLength="30" lengthAdjust="spacingAndGlyphs" class="s">08:15f</text>
<text x="1745" y="709" textLength="30" lengthAdjust="spacingAndGlyphs" class="s">09:00f</text>
<text x="1812" y="709" textLength="30" lengthAdjust="spacingAndGlyphs" class="s">09:15f</text>
<text x="1880" y="709" textLength="30" lengthAdjust="spacingAndGlyphs" class="s">10:00f</text>
<path stroke="#9a9a9a" d="M542.500 710V717M610.500 713V717M677.500 710V717M745.500 713V717M813.500 710V717M880.500 713V717M948.500 710V717M1016.500 713V717M1083.500 710V717M1151.500 713V717M1219.500 710V717M1286.500 713V717M1354.500 710V717M1421.500 713V717M1489.500 710V717M1557.500 713V717M1624.500 710V717M1692.500 713V717M1759.500 710V717M1827.500 713V717M1895.500 710V717"/>
</g>
<rect x="537" y="717" width="1364" height="1" fill="#0a0a0a"/>
<rect x="537" y="718" width="1364" height="15" fill="#70736c"/>
<rect x="541" y="733" width="1358" height="1" fill="#0f1a0c"/><rect x="541" y="734" width="1358" height="3" fill="#5e8e4e"/>
<rect x="534" y="737" width="1368" height="1" fill="#0a0a0a"/>
<rect x="535" y="718" width="6" height="15" rx="2" fill="#3f80c4"/><rect x="1895" y="718" width="6" height="15" rx="2" fill="#3f80c4"/>
<rect x="534" y="738" width="7" height="302" fill="#2a2a2a"/><rect x="534" y="738" width="1" height="302" fill="#0d0d0d"/>
<rect x="541" y="738" width="1361" height="38" fill="#2b2b2b"/>
<rect x="541" y="739" width="1353" height="17" fill="#75403c"/><rect x="541" y="756" width="1361" height="2" fill="#381c1c"/>
<rect x="541" y="758" width="1361" height="17" fill="#783e3b"/><rect x="541" y="775" width="1361" height="1" fill="#381c1c"/>
<rect x="541" y="776" width="1361" height="264" fill="url(#rr)"/>
<path d="M925 699V1040" stroke="#5f90c4" stroke-width="1"/>
<path d="M919.500 703H930.500V712L925 717L919.500 712Z" fill="#3f7fc4"/>
<use href="#I" x="925" y="785"/><use href="#I" x="925" y="804"/><use href="#I" x="925" y="823"/><use href="#I" x="925" y="861"/><use href="#I" x="925" y="880"/><use href="#I" x="925" y="899"/><use href="#I" x="925" y="918"/><use href="#I" x="925" y="937"/><use href="#I" x="925" y="956"/><use href="#I" x="925" y="975"/><use href="#I" x="925" y="994"/><use href="#I" x="925" y="1013"/><use href="#I" x="925" y="1032"/>
<use href="#key" x="812" y="842"/><use href="#key" x="1083" y="842"/>
<!-- scrollbar strip -->
<rect x="1902" y="682" width="16" height="358" fill="#232323"/>
<path d="M1905 720H1916V729L1910.500 734L1905 729Z" fill="#c8c8c8"/>
<rect x="1902" y="738" width="16" height="1" fill="#111"/>
<path d="M1908 745L1902 750H1913L1908 745Z" fill="none" stroke="#bbb" stroke-width="1.200"/><rect x="1910" y="743" width="7" height="6" fill="#bbb"/><circle cx="1908" cy="750" r="2.500" fill="#232323" stroke="#ccc"/>
<rect x="1904" y="756" width="12" height="194" rx="2" fill="#3a3a3a"/>
<!-- bottom bar -->
<rect x="2" y="1040" width="1915" height="1" fill="#0a0a0a"/>
<rect x="2" y="1041" width="1915" height="16" fill="#212121"/>
<rect x="5" y="1041" width="18" height="16" fill="#1b2c3a"/><rect x="9" y="1043" width="7" height="7" fill="none" stroke="#3f7fbc"/><rect x="12" y="1046" width="7" height="7" fill="none" stroke="#3f7fbc"/>
<circle cx="32" cy="1047" r="3.500" fill="none" stroke="#a8a8a8"/><rect x="33" y="1047" width="5" height="5" fill="none" stroke="#a8a8a8"/>
<rect x="48" y="1042" width="8" height="13" fill="#8a8a8a"/><path d="M52 1041V1056M48 1046H56M48 1051H56" stroke="#232323"/>
<ellipse cx="71" cy="1046" rx="4" ry="3.500" fill="#a0a0a0"/><path d="M66 1052H76" stroke="#a0a0a0" stroke-width="2"/>
<text x="107" y="1053" textLength="115" lengthAdjust="spacingAndGlyphs" style="fill:#b4b4b4">フレームレンダリング時間</text>
<text x="229" y="1053" textLength="19" lengthAdjust="spacingAndGlyphs" style="font-size:11px;fill:#4e9a6a">1ms</text>
<rect x="282" y="1041" width="133" height="16" fill="#272727"/>
<text x="309" y="1053" textLength="80" lengthAdjust="spacingAndGlyphs" style="fill:#8c8c8c">スイッチ / モード</text>
<path d="M541 1050h8l-4 -4z" fill="#aaa"/>
<circle cx="566" cy="1049" r="3.500" fill="none" stroke="#bbb" stroke-width="1.200"/><path d="M570 1049H608" stroke="#555"/>
<path d="M621 1052L628 1045L632 1049L634 1046L638 1052Z" fill="#a8a8a8"/>
<rect y="1057" width="1920" height="2" fill="#d8d8d8"/>
</svg>
</body></html>
